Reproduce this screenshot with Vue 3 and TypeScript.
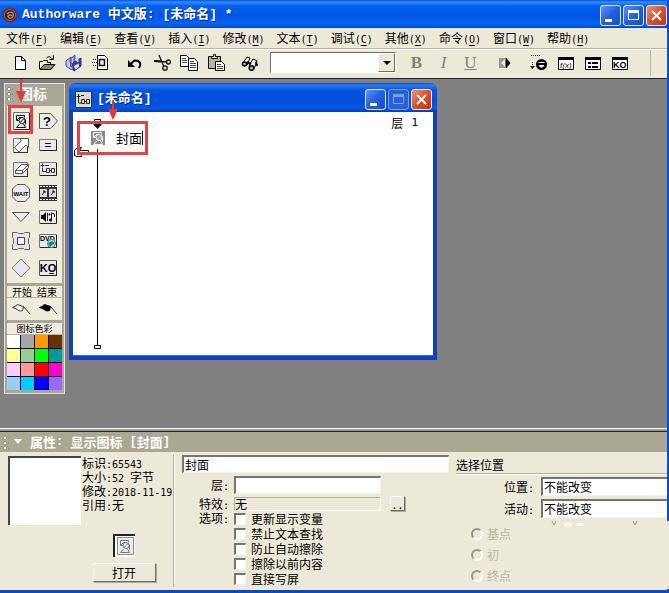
<script setup lang="ts">
import { ref } from 'vue'

interface MenuEntry { text: string; key: string }
interface Icon { name: string; art: string }

const menus: MenuEntry[] = [
  { text: '文件', key: 'F' }, { text: '编辑', key: 'E' }, { text: '查看', key: 'V' },
  { text: '插入', key: 'I' }, { text: '修改', key: 'M' }, { text: '文本', key: 'T' },
  { text: '调试', key: 'C' }, { text: '其他', key: 'X' }, { text: '命令', key: 'O' },
  { text: '窗口', key: 'W' }, { text: '帮助', key: 'H' },
]

const sans = 'font-family="Liberation Sans"'

// Toolbar artwork, 18 x 18
const fileTools: Icon[] = [
  { name: 'new', art: '<path d="M4.500 2.500h6l4 4v9h-10z" fill="#fff" stroke="#000"/><path d="M10.500 2.500v4h4" fill="none" stroke="#000"/>' },
  { name: 'open', art: '<path d="M1.500 15V7.500h3l1-1h4v2h3v2" fill="#f4f1c0" stroke="#000"/><path d="M2 15.500l4-5h11l-4 5z" fill="#8a8a6a" stroke="#000"/><path d="M8.500 4q3-3 6 1M15.500 1v4.500h-4" fill="none" stroke="#000"/>' },
  { name: 'save', art: '<path d="M1 7l5-4v9l3 4-4-1-4-3z" fill="#b8bee8" stroke="#4b519c"/><path d="M5 5l5-4v8l-4 4z" fill="#8088cc" stroke="#4b519c"/><path d="M7 9l9-5v8l-7 5z" fill="#3c4496" stroke="#2a3078"/><path d="M10 6l3-3v5M9.500 12l4-2v3l-3 2zM7.500 4v5M3.500 7v5" fill="#e6e8ff" stroke="#c2c7f2"/>' },
  { name: 'import', art: '<path d="M5.500 1.500h7l3 3v11h-10z" fill="#fff" stroke="#000"/><path d="M7.500 5.500h5v6h-5z" fill="#eee" stroke="#111" stroke-width="1.500"/><path d="M1 5.500h6M0 8.500h6M1 11.500h6" stroke="#222" stroke-dasharray="1 1"/>' },
]
const editTools: Icon[] = [
  { name: 'undo', art: '<path d="M2 6v7h7z" fill="#000"/><path d="M5 10q3-5 7-3 4 2 1 7" fill="none" stroke="#000" stroke-width="2"/>' },
  { name: 'cut', art: '<path d="M1 7l13 1M6 1l5 12" stroke="#111" stroke-width="1.300"/><path d="M1 7l7 .5" stroke="#111" stroke-width="2"/><circle cx="15.500" cy="8" r="2" fill="#ddd" stroke="#111" stroke-width="1.300"/><circle cx="12" cy="14" r="2.200" fill="#ddd" stroke="#111" stroke-width="1.300"/>' },
  { name: 'copy', art: '<path d="M.5 1.500h6l2 2v9h-8z" fill="#fff" stroke="#000"/><path d="M2 4.500h4M2 6.500h5M2 8.500h5" stroke="#444"/><path d="M8.500 4.500h6l3 3v9h-9z" fill="#fff" stroke="#000"/><path d="M10 7.500h4M10 9.500h6M10 11.500h6M10 13.500h6" stroke="#444"/>' },
  { name: 'paste', art: '<path d="M1.500 2.500h12v12h-12z" fill="#b9b48a" stroke="#000"/><path d="M4.500 4.500v-2h2v-2h2v2h2v2z" fill="#fff" stroke="#000"/><path d="M8.500 7.500h6l3 3v6h-9z" fill="#fff" stroke="#000"/><path d="M10 10.500h4M10 12.500h6M10 14.500h6" stroke="#444"/>' },
]
const findTools: Icon[] = [
  { name: 'find', art: '<path d="M2 9l4-6 3 1-3 7zM8 12l4-7 4 2-3 8z" fill="#eee" stroke="#000"/><circle cx="3.500" cy="10" r="2" fill="#bbb" stroke="#000" stroke-width="1.500"/><circle cx="10.500" cy="14" r="2.300" fill="#bbb" stroke="#000" stroke-width="1.500"/><path d="M6 8l4 2M15 8l1 4" stroke="#000" stroke-width="2"/>' },
]
const runTools: Icon[] = [
  { name: 'run', art: '<path d="M3 4h6v10H3z" fill="#9b998c"/><path d="M9 5v8L5 9z" fill="#ece9d8"/><path d="M9.500 4h1l4 5-4 5h-1z" fill="#000"/>' },
]
const panelTools: Icon[] = [
  { name: 'control', art: '<path d="M1 1.500h9M2.500 8v8" stroke="#333" stroke-dasharray="1 1"/><path d="M0 12h5l-2.500 3z" fill="#222"/><circle cx="11.500" cy="10.500" r="5.500" fill="#000"/><path d="M8.500 8.500h6M9 11.500h5l-2.500 2z" stroke="#fff" fill="#fff"/>' },
  { name: 'function', art: `<path d="M1.500 3.500h15v12h-15z" fill="#fff" stroke="#000"/><path d="M1 3h16v3H1z"/><text x="3" y="14" font-size="8" font-style="italic" ${sans}>f(x)</text>` },
  { name: 'variables', art: '<path d="M1.500 3.500h15v12h-15z" fill="#fff" stroke="#000"/><path d="M1 3h16v3H1zM4 8h3v2H4zM8 8h6v2H8zM4 12h3v2H4zM8 12h6v2H8z"/>' },
  { name: 'knowledge', art: `<path d="M1.500 3.500h15v12h-15z" fill="#fff" stroke="#000"/><path d="M1 3h16v3H1z"/><text x="2" y="14" font-size="9" font-weight="700" ${sans}>KO</text>` },
]

// Palette artwork, 20 x 20
const figure = (ink: string): string =>
  `<path d="M8 9.500H5.500v-5h8v2M8.500 6.500L6 9M14.500 8.500v5M8.500 13l-3 3.500h9L12.500 13" fill="none" stroke="${ink}"/><circle cx="11" cy="9.500" r="3" fill="none" stroke="${ink}"/><path d="M9 11.500l4-4M8 6.500h4" stroke="${ink}"/>`
const plate = '<path d="M2.500 1.500h16v17h-16z" fill="#e9e9ee" stroke="#777"/><path d="M18.500 2v16.500H3" fill="none" stroke="#222"/>'
const tile = '<path d="M1.500 3.500h17v13h-17z" fill="#e9e9ee" stroke="#777"/><path d="M18.500 4v12.500H2" fill="none" stroke="#222"/>'
const slab = '<path d="M2.500 3.500h14v14h-14z" fill="#e9e9ee" stroke="#777"/><path d="M3 17.500h13.500V8" fill="none" stroke="#333"/>'
const calcArt = '<path d="M4.500 4.500v4M2.500 6.500h4M4.500 9v3.500h4M8.500 9.500h3v4h-3zM13.500 9.500h3v4h-3zM11 11.500h3M7 6.500h4" fill="none" stroke="#333"/>'

const paletteIcons: Icon[] = [
  { name: '显示', art: plate + figure('#111') },
  { name: '判断', art: `<path d="M1.500 2.500h11l7 7.500-7 7.500h-11z" fill="#ececf0" stroke="#555"/><text x="5" y="15" font-size="13" font-weight="700" ${sans}>?</text>` },
  { name: '移动', art: slab + '<path d="M3.500 12.500l7-7-2-2h9v9l-2.500-2.500-7 7z" fill="#fff" stroke="#555"/>' },
  { name: '计算', art: '<path d="M1.500 4.500h17v11h-17z" fill="#e9e9ee" stroke="#777"/><path d="M18.500 5v10.500H2" fill="none" stroke="#222"/><path d="M7 8.500h6M7 11.500h6" stroke="#111"/>' },
  { name: '擦除', art: slab + '<path d="M4.500 11.500l6-6h7v3l-6 6h-7z" fill="#fff" stroke="#555"/><path d="M4.500 11.500h7l6-6M11.500 11.500v3" fill="none" stroke="#555"/>' },
  { name: '群组', art: tile + calcArt },
  { name: '等待', art: `<path d="M6 1.500h8l4.500 4.500v8L14 18.500H6L1.500 14V6z" fill="#e9e9ee" stroke="#555"/><text x="10" y="12.500" text-anchor="middle" font-size="6" font-weight="700" ${sans}>WAIT</text>` },
  { name: '数字电影', art: '<path d="M1 2h18v16H1z" fill="#333"/><path d="M2 3.500h17M2 16.500h17" stroke="#eee" stroke-dasharray="2 1"/><path d="M2 6h7v8H2zM11 6h7v8h-7z" fill="#ddd"/><path d="M4 12l3-4M5 8h2v2M13 12l3-4M14 8h2v2" fill="none" stroke="#111"/>' },
  { name: '导航', art: '<path d="M1.500 5.500h17l-8.500 9z" fill="#ececf0" stroke="#555"/>' },
  { name: '声音', art: tile + '<path d="M3 8h2l3-3v10l-3-3H3z"/><path d="M9.500 6v8M13.500 13V6l3 1v3" fill="none" stroke="#222"/><circle cx="12.500" cy="13" r="1.500"/><circle cx="11.500" cy="7.500" r="1"/>' },
  { name: '框架', art: '<path d="M1.500 1.500h5l1 1h5l1-1h5v5l-1 1v5l1 1v5h-5l-1-1h-5l-1 1h-5v-5l1-1v-5l-1-1z" fill="#e4e4e8" stroke="#666"/><path d="M6.500 6.500h7v7h-7z" fill="#f4f4f4" stroke="#444"/>' },
  { name: 'DVD', art: `${tile}<text x="2" y="10" font-size="7" font-weight="700" ${sans}>DVD</text><circle cx="13.500" cy="12.500" r="4" fill="#d8f2f4" stroke="#267a86"/><path d="M10 12l4-2 1 3-3 3zM14 10l3 2-2 2z" fill="#128274"/>` },
  { name: '交互', art: '<path d="M10 1l9 9-9 9-9-9z" fill="#e6e6ec" stroke="#777"/>' },
  { name: '知识对象', art: `<path d="M1.500 2.500h17v15h-17z" fill="#e9e9ee" stroke="#555"/><path d="M18.500 3v14.500H2" fill="none" stroke="#222"/><text x="10" y="13.500" text-anchor="middle" font-size="11" font-weight="700" ${sans}>KO</text><path d="M11 15.500h5" stroke="#111"/>` },
]

const swatches: string[] = [
  '#ffffff', '#a6a6a6', '#ff9900', '#663300',
  '#ffff99', '#99cc99', '#00ff00', '#009999',
  '#ffccff', '#ff9999', '#ff0000', '#ff00cc',
  '#99ccff', '#00ccff', '#0000ff', '#9966ff',
]

const facts = [
  { label: '标识', value: '65543', unit: '' },
  { label: '大小', value: '52 ', unit: '字节' },
  { label: '修改', value: '2018-11-19', unit: '' },
  { label: '引用', value: '', unit: '无' },
]
const options = ['更新显示变量', '禁止文本查找', '防止自动擦除', '擦除以前内容', '直接写屏']
const anchors = ['基点', '初', '终点']

const iconName = ref('封面')
const layer = ref('')
const effect = ref('无')
</script>

<template>
  <div class="app">
    <header class="titlebar">
      <svg class="logo" viewBox="0 0 16 16">
        <circle cx="8" cy="8" r="7.500" fill="#7c2722" /><circle cx="8" cy="8" r="5.500" fill="#2e1f22" stroke="#b85a4c" />
        <path d="M5 7q3-3 6-1 1 4-2 5-3 0-3-2 2-2 4 0" fill="none" stroke="#a9928f" stroke-width="1.300" />
      </svg>
      <h1>Authorware 中文版: [未命名] *</h1>
      <div class="winbuttons">
        <button class="wb" aria-label="最小化"><svg viewBox="0 0 19 19"><path d="M4 13h7v3H4z" fill="#fff" /></svg></button>
        <button class="wb" aria-label="最大化"><svg viewBox="0 0 19 19"><path d="M4.500 4.500h10v9h-10z" fill="none" stroke="#fff" /><path d="M4 4h11v3H4z" fill="#fff" /></svg></button>
        <button class="wb close" aria-label="关闭"><svg viewBox="0 0 19 19"><path d="M5 5l9 9M14 5l-9 9" stroke="#fff" stroke-width="2" /></svg></button>
      </div>
    </header>

    <nav class="menubar">
      <button v-for="m in menus" :key="m.key">{{ m.text }}<span class="lat">(<u>{{ m.key }}</u>)</span></button>
    </nav>

    <div class="toolbar">
      <div class="group"><button v-for="t in fileTools" :key="t.name" class="tool" :aria-label="t.name"><svg viewBox="0 0 18 18" v-html="t.art" /></button></div>
      <div class="group"><button v-for="t in editTools" :key="t.name" class="tool" :aria-label="t.name"><svg viewBox="0 0 18 18" v-html="t.art" /></button></div>
      <div class="group"><button v-for="t in findTools" :key="t.name" class="tool" :aria-label="t.name"><svg viewBox="0 0 18 18" v-html="t.art" /></button></div>
      <div class="combo">
        <select aria-label="文本样式"><option></option></select>
        <span class="drop"><svg viewBox="0 0 8 8"><path d="M0 2h8L4 6z" /></svg></span>
      </div>
      <div class="group letters">
        <button class="tool"><b>B</b></button>
        <button class="tool"><i>I</i></button>
        <button class="tool"><u>U</u></button>
      </div>
      <div class="group"><button v-for="t in runTools" :key="t.name" class="tool" :aria-label="t.name"><svg viewBox="0 0 18 18" v-html="t.art" /></button></div>
      <div class="group"><button v-for="t in panelTools" :key="t.name" class="tool" :aria-label="t.name"><svg viewBox="0 0 18 18" v-html="t.art" /></button></div>
      <span class="tool-end"></span>
    </div>

    <main class="workspace">
      <aside class="palette">
        <h2><span class="grip"></span>图标</h2>
        <section class="icons">
          <button v-for="p in paletteIcons" :key="p.name" :aria-label="p.name"><svg viewBox="0 0 20 20" v-html="p.art" /></button>
        </section>
        <section>
          <h3 class="wide"><span>开始</span><span>结束</span></h3>
          <div class="flags">
            <button aria-label="开始"><svg viewBox="0 0 20 14"><path d="M1.500 5.500q3-1 5-3l6 2-1 4q-2 1-4 0-2-2-6-3z" fill="#fff" stroke="#333" /><path d="M12 4l7 8" stroke="#333" /></svg></button>
            <button aria-label="结束"><svg viewBox="0 0 20 14"><path d="M1.500 5.500q3-1 5-3l6 2-1 4q-2 1-4 0-2-2-6-3z" stroke="#000" /><path d="M12 4l7 8" stroke="#333" /></svg></button>
          </div>
        </section>
        <section>
          <h3>图标色彩</h3>
          <div class="swatches"><button v-for="c in swatches" :key="c" :style="{ background: c }" :aria-label="c"></button></div>
        </section>
        <span class="mark mark-tool"></span>
        <svg class="arrow arrow-tool" viewBox="0 0 12 24"><path d="M5 0h2v12h4L6 24 1 12h4z" /></svg>
      </aside>

      <section class="flow">
        <header>
          <svg class="flow-icon" viewBox="0 0 17 17"><path d="M.5.5h16v16H.5z" fill="#dcdccf" stroke="#333" /><path d="M3.500 3v4M1.500 5.500h4M3.500 7v5h3M6.500 8.500h3v4h-3zM11.500 8.500h3v4h-3zM9 10.500h3M6 4.500h3" fill="none" stroke="#222" /></svg>
          <h2>[未命名]</h2>
          <div class="winbuttons">
            <button class="wb" aria-label="最小化流程"><svg viewBox="0 0 19 19"><path d="M4 13h7v3H4z" fill="#fff" /></svg></button>
            <button class="wb off" aria-label="最大化流程" disabled><svg viewBox="0 0 19 19"><path d="M4.500 4.500h10v9h-10z" fill="none" stroke="#7ba2ef" /><path d="M4 4h11v3H4z" fill="#7ba2ef" /></svg></button>
            <button class="wb close" aria-label="关闭流程"><svg viewBox="0 0 19 19"><path d="M5 5l9 9M14 5l-9 9" stroke="#fff" stroke-width="2" /></svg></button>
          </div>
        </header>
        <div class="canvas">
          <span class="level">层<span class="lat">1</span></span>
          <svg class="line" viewBox="0 0 10 234"><path d="M1.500 5V2.500h6V5M4.500 6v3M4.500 32v196" fill="none" stroke="#000" /><path d="M0 7h9L4.500 12z" /><path d="M1.500 228.500h6v3h-6z" fill="#fff" stroke="#000" /></svg>
          <svg class="node" viewBox="3 3 14 14"><path d="M3 3h14v14H3z" fill="#898989" /><g v-html="figure('#fff')"></g></svg>
          <span class="node-name">封面</span>
          <svg class="hand" viewBox="0 0 17 12"><path d="M1.500 4.500l3-3h4l-2 3h9v2h-6v2h-1v2h-5l-2-1z" fill="#fff" stroke="#000" /><path d="M6 6.500h4M6 8.500h3" stroke="#000" /></svg>
          <span class="mark mark-node"></span>
          <svg class="arrow arrow-node" viewBox="0 0 12 20"><path d="M5 0h2v9h4L6 20 1 9h4z" /></svg>
        </div>
      </section>
    </main>

    <section class="props">
      <h2><span class="grip"></span><svg class="tri" viewBox="0 0 8 6"><path d="M0 0h8L4 5z" fill="#fff" /></svg>属性<span class="lat">: </span>显示图标<span class="lat"> [</span>封面<span class="lat">]</span></h2>
      <div class="panes">
        <div class="summary">
          <div class="identity">
            <div class="preview"></div>
            <ul><li v-for="f in facts" :key="f.label">{{ f.label }}<span class="lat">:{{ f.value }}</span>{{ f.unit }}</li></ul>
          </div>
          <div class="open">
            <span class="type"><svg viewBox="0 0 20 20"><path d="M2.500 1.500h16v17h-16z" fill="#eee" stroke="#888" /><g v-html="figure('#777')"></g></svg></span>
            <button>打开</button>
          </div>
        </div>

        <form class="fields" @submit.prevent>
          <input v-model="iconName" class="box name" aria-label="图标名称">
          <div class="row"><label for="layer">层<span class="lat">:</span></label><input id="layer" v-model="layer" class="box"></div>
          <div class="row effect"><label for="effect">特效<span class="lat">:</span></label><input id="effect" v-model="effect" class="box flat" readonly><button type="button" class="more">. .</button></div>
          <div class="row opts">
            <span class="label">选项<span class="lat">:</span></span>
            <div><label v-for="o in options" :key="o" class="check"><input type="checkbox">{{ o }}</label></div>
          </div>
        </form>

        <div class="place">
          <h3>选择位置</h3>
          <div class="row"><label for="pos">位置<span class="lat">:</span></label><select id="pos" class="box"><option>不能改变</option></select></div>
          <div class="row"><label for="act">活动<span class="lat">:</span></label><select id="act" class="box"><option>不能改变</option></select></div>
          <div class="anchors">
            <svg class="traces" viewBox="0 0 100 8"><path d="M2 1l2 4 2-4M83 1l2 4 2-4" fill="none" stroke="#9f9b8c" /><path d="M14 6a4 3 0 0 1 8 0zM26 6a4 3 0 0 1 8 0z" fill="#fff" /></svg>
            <label v-for="a in anchors" :key="a"><input type="radio" name="anchor" disabled>{{ a }}</label>
          </div>
        </div>
      </div>
    </section>
  </div>
</template>

<style>
body { background: #ece9d8; }
</style>

<style scoped>
* { box-sizing: border-box; }
.app {
  display: flex; flex-direction: column; min-height: 100vh;
  border-right: 2px solid #0b4bd0; border-bottom: 3px solid #0b49bd;
  background: #ece9d8; color: #000;
  font: 12px/14px "Noto Sans CJK SC", sans-serif;
}
h1, h2, h3, ul { margin: 0; padding: 0; list-style: none; }
button, input, select { font: inherit; color: inherit; margin: 0; padding: 0; border: 0; background: none; border-radius: 0; }
svg { display: block; flex: none; }
.lat { font-family: "DejaVu Sans Mono", monospace; font-size: 10px; line-height: 10px; white-space: pre; }

.titlebar {
  display: flex; align-items: center; height: 28px; padding: 2px 0 0 2px; gap: 4px;
  background: linear-gradient(#0a50d8 0, #2f8bff 2px, #0560ee 6px, #0055e4 16px, #0464f8 24px, #0348c4 100%);
}
.logo { width: 16px; height: 16px; }
h1, .flow h2 {
  flex: 1; color: #fff; white-space: pre;
  font: bold 13px/20px "Liberation Mono", "Noto Sans CJK SC", monospace;
  text-shadow: 1px 1px #0b2f86;
}
.winbuttons { display: flex; gap: 2px; }
.wb {
  width: 21px; height: 21px; border: 1px solid #e4ecff; border-radius: 3px;
  background: linear-gradient(135deg, #5f92f6, #2260e0 50%, #1b4cc4);
}
.wb svg { width: 19px; height: 19px; }
.wb.close { background: linear-gradient(135deg, #ee9376, #d9502c 50%, #bf3514); }
.wb.off { border-color: #7ba2ef; background: #2860d8; }

.menubar { display: flex; height: 21px; align-items: center; border-bottom: 1px solid #b9b5a3; }
.menubar button { padding: 0 6px; white-space: nowrap; line-height: 20px; }
.menubar u { text-underline-offset: 2px; }

.toolbar { display: flex; align-items: center; height: 30px; padding: 0 0 3px 6px; gap: 7px; border-top: 1px solid #fff; border-bottom: 1px solid #222; }
.group { display: flex; }
.tool { width: 27px; height: 24px; display: flex; align-items: center; justify-content: center; }
.tool svg { width: 18px; height: 18px; }
.letters .tool { font: 17px/20px "Liberation Serif", serif; color: #858378; }
.combo {
  display: flex; width: 126px; height: 21px; background: #fff;
  border: 1px solid #fff; border-top-color: #716f64; border-left-color: #716f64;
}
.combo select { appearance: none; flex: 1; min-width: 0; }
.drop { width: 17px; display: grid; place-items: center; background: #ece9d8; border: 1px solid #fff; border-right-color: #716f64; border-bottom-color: #716f64; }
.drop svg { width: 8px; height: 8px; }
.tool-end { width: 1px; height: 26px; margin-left: 10px; background: #b9b5a3; }

.workspace { flex: 1; display: flex; align-items: flex-start; gap: 4px; padding: 4px 0 0 4px; background: #808080; }
.palette {
  position: relative; width: 61px; flex: none; display: flex; flex-direction: column; gap: 3px;
  padding: 0 2px 3px; border: 1px solid #e6e3d2; background: #aaa798;
}
.palette h2 { display: flex; align-items: center; gap: 6px; height: 19px; color: #fff; font: bold 14px/19px "Noto Sans CJK SC", sans-serif; }
.grip { width: 6px; height: 13px; background: radial-gradient(circle at 2px 2px, #fff 1px, #77746a 1px, transparent 2px) 0 0 / 5px 5px; }
.palette section { background: #efecdc; }
.icons { display: grid; grid-template-columns: 1fr 1fr; grid-template-rows: repeat(6, 24px) 30px; padding: 3px 0 0; place-items: center; }
.icons svg { width: 20px; height: 20px; }
.palette h3 { text-align: center; font-weight: 400; font-size: 9px; line-height: 12px; height: 12px; border-bottom: 1px solid #b9b5a3; }
.palette h3.wide { display: flex; justify-content: center; gap: 5px; font-size: 10px; }
.flags { display: flex; justify-content: space-around; align-items: center; height: 22px; }
.flags svg { width: 20px; height: 14px; }
.swatches { display: grid; grid-template-columns: repeat(4, 1fr); gap: 1px; background: #111; }
.swatches button { height: 13px; }

.mark { position: absolute; border: 3px solid #e04444; pointer-events: none; }
.mark-tool { left: 3px; top: 21px; width: 25px; height: 29px; }
.mark-node { left: 4px; top: 9px; width: 71px; height: 34px; }
.arrow { position: absolute; width: 12px; fill: #df3b3b; pointer-events: none; }
.arrow-tool { left: 10px; top: -5px; height: 24px; }
.arrow-node { left: 34px; top: -12px; height: 20px; }

.flow {
  flex: 0 1 368px; min-width: 0; border: 4px solid #123fba; border-top: 0; border-radius: 7px 7px 0 0; background: #fff;
  box-shadow: inset 0 -1px #2d6be6;
}
.flow header {
  display: flex; align-items: center; height: 29px; gap: 5px; margin: 0 -4px; padding: 3px 5px 0 6px; border-radius: 7px 7px 0 0;
  background: linear-gradient(#0c45bd 0, #2a7df5 2px, #0655dc 7px, #004edc 18px, #0458e6 25px, #0a3cae 100%);
}
.flow-icon { width: 17px; height: 17px; }
.canvas { position: relative; height: 244px; }
.level { position: absolute; right: 15px; top: 4px; display: flex; gap: 8px; align-items: center; }
.level .lat { font-size: 11px; }
.line { position: absolute; left: 20px; top: 5px; width: 10px; height: 234px; }
.node { position: absolute; left: 18px; top: 19px; width: 14px; height: 14px; }
.node-name { position: absolute; left: 43px; top: 19px; border-right: 1px solid #000; font-size: 13px; }
.hand { position: absolute; left: 0; top: 34px; width: 17px; height: 12px; }

.props { border-top: 1px solid #fff; }
.props h2 {
  display: flex; align-items: center; height: 21px; padding-left: 3px; border-top: 1px solid #222; box-shadow: 0 -2px #9d9b8f;
  margin-top: 2px; background: #aaa890; color: #fff; font: bold 13px/20px "Noto Sans CJK SC", sans-serif;
}
.props h2 .lat { font: bold 12px/20px "Liberation Mono", monospace; }
.tri { width: 8px; height: 6px; margin: 0 8px 0 5px; }
.panes { display: flex; padding-top: 3px; height: 138px; white-space: nowrap; }
.summary { width: 174px; height: 132px; flex: none; border-right: 1px solid #b4b09f; box-shadow: 1px 0 #fff; padding: 1px 0 0 8px; }
.identity { display: flex; gap: 1px; height: 78px; }
.identity li { height: 14px; }
.preview { width: 73px; height: 69px; background: #fff; border-top: 2px solid #444; border-left: 2px solid #444; }
.open { width: 100px; display: flex; flex-direction: column; align-items: center; gap: 6px; margin-left: 66px; }
.type { width: 22px; height: 23px; background: #fff; border-top: 2px solid #222; border-left: 2px solid #222; }
.type svg { width: 20px; height: 20px; }
.open button { width: 63px; height: 19px; line-height: 16px; }
.open button, .more { background: #ece9d8; border: 1px solid #fff; border-right-color: #716f64; border-bottom-color: #716f64; box-shadow: 1px 1px #aca899; }
.box { background: #fff; border: 1px solid #f6f4ea; border-top: 2px solid #77756a; border-left: 2px solid #77756a; padding-left: 1px; min-width: 0; }
.fields { width: 267px; margin-left: 8px; flex: none; }
.name { display: block; width: 100%; height: 18px; }
.row { display: flex; align-items: center; }
.fields .row { gap: 5px; margin-top: 3px; }
.fields .row > label, .label { width: 47px; text-align: right; }
.fields .row .box { width: 147px; height: 18px; }
.fields .row.effect { margin-top: 2px; }
.fields .row .flat { height: 14px; background: #ece9d8; border-width: 1px; border-color: #b4b09f #fff #fff #b4b09f; padding: 0; }
.more { width: 15px; height: 15px; margin-left: 4px; line-height: 10px; }
.fields .row.opts { align-items: flex-start; margin-top: 0; }
.check { display: flex; align-items: center; gap: 5px; height: 15px; }
.check input { appearance: none; width: 12px; height: 12px; background: #fff; border: 1px solid #f6f4ea; border-top: 2px solid #77756a; border-left: 2px solid #77756a; }
.place { flex: 1; min-width: 0; margin-left: 7px; }
.place h3 { font-weight: 400; font-size: 12px; line-height: 16px; padding-top: 2px; margin-bottom: 3px; border-bottom: 1px solid #b4b09f; box-shadow: 0 1px #fff; }
.place .row { gap: 7px; margin-bottom: 3px; }
.place .row label { width: 78px; text-align: right; }
.place .box { appearance: none; flex: 1; height: 19px; border-right: 0; }
.anchors { margin-right: -2px; padding: 2px 0 0 15px; background: #ece9d8; color: #b9b6a7; position: relative; height: 68px; }
.traces { position: absolute; left: 94px; top: -1px; width: 100px; height: 8px; }
.anchors label { display: flex; align-items: center; gap: 4px; height: 21px; }
.anchors input { appearance: none; width: 12px; height: 12px; border-radius: 50%; border: 2px solid #99968a; border-right-color: #fff; border-bottom-color: #fff; }
</style>
